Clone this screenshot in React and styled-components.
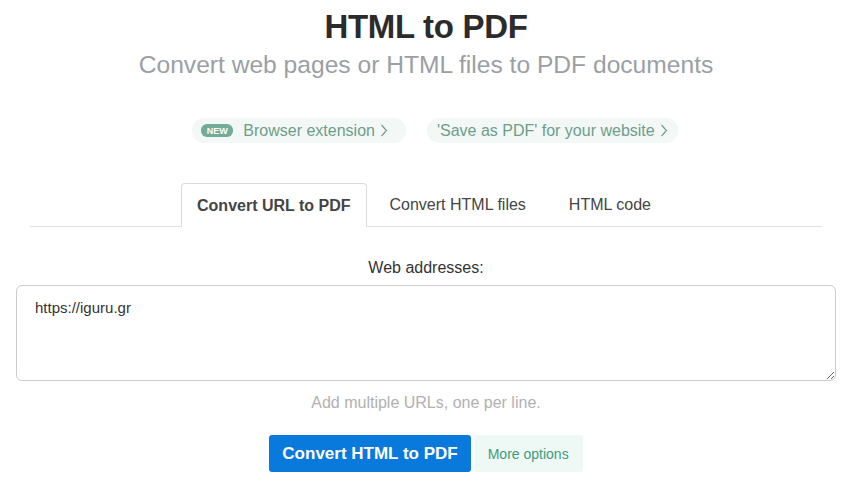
import React from "react";
import styled, { createGlobalStyle } from "styled-components";

const Global = createGlobalStyle`
  html, body { margin: 0; padding: 0; background: #fff; }
  body { font-family: "Liberation Sans", Arial, sans-serif; }
  * { box-sizing: border-box; }
`;

const Page = styled.div`
  width: 850px;
  display: flex;
  flex-direction: column;
  align-items: center;
  padding: 0 14px 0 16px;
`;

const Title = styled.h1`
  margin: 11px 0 0;
  font-size: 33px;
  line-height: 32px;
  font-weight: 700;
  letter-spacing: -0.3px;
  color: #2b2b2b;
`;

const Subtitle = styled.p`
  margin: 8px 0 0;
  font-size: 24.6px;
  line-height: 28px;
  color: #9a9fa5;
`;

const PillRow = styled.div`
  margin-top: 39px;
  padding-left: 18px;
  display: flex;
  gap: 21px;
`;

const Pill = styled.a`
  display: flex;
  align-items: center;
  height: 25px;
  padding: 0 ${(p) => p.$pr}px 0 ${(p) => p.$pl}px;
  background: #f3f8f6;
  border-radius: 12px;
  color: #6c9e8b;
  font-size: 16px;
  text-decoration: none;
  gap: 5px;
`;

const Badge = styled.span`
  display: inline-flex;
  align-items: center;
  justify-content: center;
  width: 32px;
  height: 13px;
  border-radius: 6px;
  background: #72ab97;
  color: #fff;
  font-size: 9px;
  font-weight: 700;
  margin-right: 5px;
`;

const Chevron = () => (
  <svg width="8" height="13" viewBox="0 0 8 13" fill="none">
    <polyline points="1.5,1 6.5,6.5 1.5,12" stroke="#6c9e8b" strokeWidth="1.2" />
  </svg>
);

const TabBar = styled.div`
  margin-top: 40px;
  width: 792px;
  margin-left: 14px;
  margin-right: 14px;
  align-self: flex-start;
  display: flex;
  justify-content: center;
  gap: 3px;
  border-bottom: 1px solid #e2e2e2;
`;

const Tab = styled.div`
  height: 44px;
  display: flex;
  align-items: center;
  padding: 0 ${(p) => (p.$active ? 15 : 19)}px;
  font-size: 16px;
  font-weight: ${(p) => (p.$active ? 700 : 400)};
  color: #444;
  border: 1px solid ${(p) => (p.$active ? "#dcdcdc" : "transparent")};
  border-bottom: none;
  border-radius: 4px 4px 0 0;
  background: ${(p) => (p.$active ? "#fff" : "transparent")};
  margin-bottom: ${(p) => (p.$active ? "-1px" : "0")};
  height: ${(p) => (p.$active ? 44 : 43)}px;
`;

const Label = styled.div`
  margin-top: 31px;
  font-size: 16px;
  line-height: 20px;
  color: #333;
`;

const Area = styled.textarea`
  margin-top: 7px;
  width: 820px;
  height: 96px;
  border: 1px solid #cccccc;
  border-radius: 6px;
  padding: 12px 18px;
  font-family: "Liberation Sans", Arial, sans-serif;
  font-size: 15px;
  line-height: 20px;
  color: #333;
  outline: none;
`;

const Hint = styled.div`
  margin-top: 12px;
  font-size: 16px;
  line-height: 20px;
  color: #b1b1b1;
`;

const ButtonRow = styled.div`
  margin-top: 22px;
  display: flex;
  gap: 3px;
`;

const PrimaryButton = styled.button`
  height: 37px;
  padding: 0 13px;
  border: none;
  border-radius: 3px;
  background: #0a79dc;
  color: #fff;
  font-family: "Liberation Sans", Arial, sans-serif;
  font-size: 17px;
  font-weight: 700;
`;

const SecondaryButton = styled.button`
  height: 37px;
  padding: 0 14px;
  border: none;
  border-radius: 3px;
  background: #eef8f5;
  color: #3f9b7c;
  font-family: "Liberation Sans", Arial, sans-serif;
  font-size: 14px;
`;

export default function App() {
  return (
    <>
      <Global />
      <Page>
        <Title>HTML to PDF</Title>
        <Subtitle>Convert web pages or HTML files to PDF documents</Subtitle>
        <PillRow>
          <Pill $pl={9} $pr={18}>
            <Badge>NEW</Badge>
            Browser extension
            <Chevron />
          </Pill>
          <Pill $pl={10} $pr={10}>
            'Save as PDF' for your website
            <Chevron />
          </Pill>
        </PillRow>
        <TabBar>
          <Tab $active>Convert URL to PDF</Tab>
          <Tab>Convert HTML files</Tab>
          <Tab>HTML code</Tab>
        </TabBar>
        <Label>Web addresses:</Label>
        <Area defaultValue="https://iguru.gr" />
        <Hint>Add multiple URLs, one per line.</Hint>
        <ButtonRow>
          <PrimaryButton>Convert HTML to PDF</PrimaryButton>
          <SecondaryButton>More options</SecondaryButton>
        </ButtonRow>
      </Page>
    </>
  );
}
